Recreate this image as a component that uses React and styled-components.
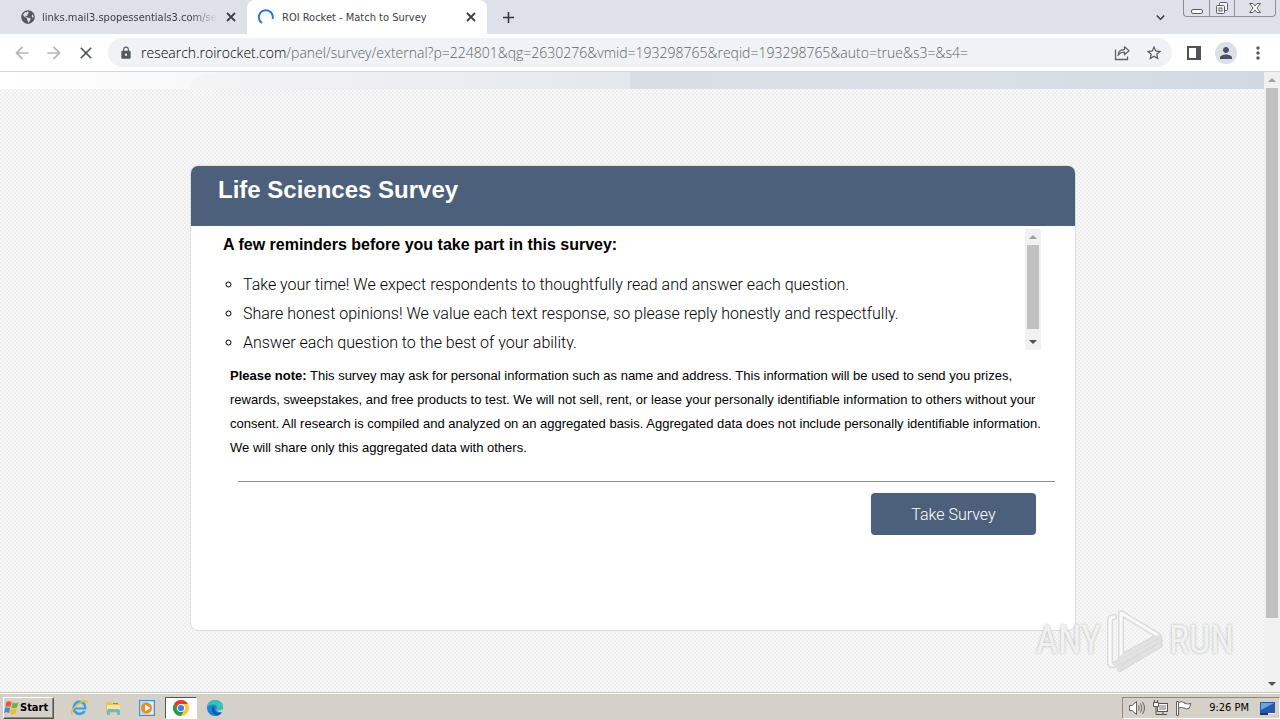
import styled, { createGlobalStyle } from "styled-components";
import { FaGlobeAmericas } from "react-icons/fa";
import {
  MdArrowBack,
  MdArrowForward,
  MdClose,
  MdLock,
  MdStarBorder,
  MdPerson,
  MdMoreVert,
  MdAdd,
  MdExpandMore,
} from "react-icons/md";

const NAVY = "#4d607b";

const reminders = [
  "Take your time! We expect respondents to thoughtfully read and answer each question.",
  "Share honest opinions! We value each text response, so please reply honestly and respectfully.",
  "Answer each question to the best of your ability.",
];

const ShareIcon = () => (
  <svg width="18" height="18" viewBox="0 0 18 18" fill="none" stroke="#5f6368" strokeWidth="1.3">
    <path d="M2.5 5.5v10h12v-3" />
    <path d="M5 11.5c.3-4 2.4-6 6.5-6V2.8l4.5 4-4.5 4V8.2C8.5 8.2 6.5 9.2 5 11.5z" strokeLinejoin="round" />
  </svg>
);

const SidePanelIcon = () => (
  <svg width="14" height="14" viewBox="0 0 14 14">
    <path fill="#4f5256" fillRule="evenodd" d="M0 0h14v14H0zM2 2v10h7V2z" />
  </svg>
);

const SpinnerIcon = () => (
  <svg width="18" height="18" viewBox="0 0 18 18" fill="none" stroke="#2f73d8" strokeWidth="2">
    <path d="M5 15A7 7 0 1 1 15.6 11" />
  </svg>
);

const CloseIcon = () => (
  <svg width="14" height="14" viewBox="0 0 14 14" stroke="#3c4043" strokeWidth="1.8">
    <path d="M3 3l8 8M11 3l-8 8" />
  </svg>
);

const MinimizeIcon = () => (
  <svg width="14" height="14" viewBox="0 0 14 14" fill="#fff" stroke="#5b6068">
    <rect x="1.5" y="8.5" width="11" height="4" rx="1.5" />
  </svg>
);

const RestoreIcon = () => (
  <svg width="14" height="14" viewBox="0 0 14 14" fill="#f5f5f7" stroke="#5b6068">
    <rect x="4.5" y="1.5" width="8" height="8" rx="1" />
    <rect x="1.5" y="4.5" width="8" height="8" rx="1" />
    <rect x="4" y="7" width="3" height="3" />
  </svg>
);

const WinCloseIcon = () => (
  <svg width="14" height="14" viewBox="0 0 14 14" fill="#fff" stroke="#5b6068" strokeLinejoin="round">
    <path d="M1.5 2.5H5l2 2.5 2-2.5h3.5L9 7l3.500 4.500H9L7 9l-2 2.500H1.500L5 7z" />
  </svg>
);

const WindowsLogo = () => (
  <svg width="15" height="15" viewBox="0 0 15 15">
    <path fill="#e8562a" d="M2.5 2Q5 .5 7.5 2L6.5 7Q4 5.5 1.3 7z" />
    <path fill="#76b043" d="M8.5 2.5Q11 4 14.5 2.5L13 7.5Q10 9 7.500 7.500z" />
    <path fill="#3e8fdc" d="M1 8Q3.7 6.5 6.2 8L5 13Q2.5 11.5 0 13z" />
    <path fill="#f6bb1f" d="M7.2 8.5Q10 10 12.8 8.5L11.5 13.5Q8.5 15 6 13.5z" />
  </svg>
);

const ExplorerIcon = () => (
  <svg width="18" height="18" viewBox="0 0 18 18" fill="none">
    <path d="M15 6.200A6 6 0 1 0 14.7 12" stroke="#3aa0e0" strokeWidth="2.6" />
    <path d="M4 9.5h11.3c0-2-.3-2.7-.8-3.6" stroke="#3aa0e0" strokeWidth="2.2" />
    <path d="M2.3 16C-.5 13.5 5 6.5 10.5 3.3 14 1.3 17.3.8 16.5 4" stroke="#e9bd3a" strokeWidth="1.4" />
  </svg>
);

const FolderIcon = () => (
  <svg width="18" height="18" viewBox="0 0 18 18">
    <path fill="#e7c660" d="M2 3h6l1 2h7v9H2z" />
    <path fill="#f9e7a0" d="M3 6h13v5H3z" />
    <path fill="#6bb7dc" d="M4 10h10q2 0 2 2v4h-3v-3H6v3H3v-4z" />
    <path fill="#58a85a" d="M9 4h5v1H9z" />
  </svg>
);

const MediaIcon = () => (
  <svg width="18" height="18" viewBox="0 0 18 18">
    <rect x="1.5" y="1.5" width="15" height="15" fill="#b9d8f2" stroke="#4a8ccb" />
    <path fill="#fff" d="M10 3h5v12h-5z" opacity=".5" />
    <circle cx="8.5" cy="9" r="5.5" fill="#f08a1c" />
    <path fill="#fff" d="M7 5.5v7L12.500 9z" />
  </svg>
);

const ChromeIcon = () => (
  <svg width="18" height="18" viewBox="0 0 18 18">
    <circle cx="9" cy="9" r="8" fill="#fcc934" />
    <path fill="#e33b2e" d="M2.07 5A8 8 0 0 1 15.93 5H9L5.54 11z" />
    <path fill="#1e9e4a" d="M2.07 5A8 8 0 0 0 9 17l3.46-6L5.54 11z" />
    <circle cx="9" cy="9" r="4" fill="#fff" />
    <circle cx="9" cy="9" r="3.1" fill="#3f7ce8" />
  </svg>
);

const EdgeIcon = () => (
  <svg width="18" height="18" viewBox="0 0 18 18">
    <circle cx="9" cy="9" r="8" fill="#1784d8" />
    <path fill="#37c4b4" d="M1.2 8C2 3.5 5 1 9 1c4.5 0 8 3 8 6.5 0 2.5-2 4-4.2 4-1.8 0-3-.6-2.5-1.3C12 8 10 5.5 7 5.5 4.5 5.5 2.5 6.500 1.200 8z" />
    <path fill="#125ba6" d="M6.5 7.5c-2 3 0 8 4.5 9.3 2-.5 3.6-1.6 4.700-3.300-3.700 1.500-8-.5-7.200-4.500z" />
    <path fill="#d6d2c9" d="M10.3 10.2c-.5.7.7 1.3 2.5 1.3 1.8 0 3.2-.7 4-2v3.300c-3 1-6.200 0-6.500-2.600z" />
  </svg>
);

const SpeakerIcon = () => (
  <svg width="18" height="16" viewBox="0 0 18 16" fill="none" stroke="#66635e">
    <path fill="#fff" d="M1.5 5.5H4L8.5 1.5v13L4 10.5H1.5z" />
    <path d="M10.5 5.5q1.5 2.5 0 5M12.5 3.5q3 4.5 0 9M14.5 2q4 6 0 12" />
  </svg>
);

const NetworkIcon = () => (
  <svg width="17" height="16" viewBox="0 0 17 16" fill="none" stroke="#55534f">
    <rect x="5.5" y="3.5" width="10" height="8" fill="#b9b7b2" stroke="#55534f" />
    <path d="M6.5 4.5h8v6h-8z" stroke="#fff" />
    <path d="M7 14.5h8M11 12v2" />
    <path fill="#fff" d="M1.5 2.5h5v4h-5zM2.5 0v2M5.5 0v2" />
    <path d="M4 7v7.5h3" />
  </svg>
);

const FlagIcon = () => (
  <svg width="18" height="16" viewBox="0 0 18 16" stroke="#66635e" fill="#fff">
    <path d="M1.5 1.5h2v14h-2zM3.5 2.5q3-1.5 6 0v1q3 1 6.5 0l-2 5q-3 1-5-.5-2.500-1-5.500 0z" />
  </svg>
);

const DesktopIcon = () => (
  <svg width="17" height="16" viewBox="0 0 17 16">
    <path fill="#2659a8" d="M1 2h15v11H1z" />
    <path fill="#6ba4e6" d="M2 3h13L2 10z" />
    <path fill="#17386d" d="M1 13h8v2H1z" />
    <path fill="#f3f5f8" d="M9 13h7v1H9z" />
  </svg>
);

const PlayMark = () => (
  <svg width="58" height="66" viewBox="0 0 58 66" fill="none" strokeLinejoin="round" strokeLinecap="round">
    <g stroke="#c4c4c4" strokeWidth="6" opacity=".5">
      <path d="M15 50V6l38 23z" />
      <path d="M8 10q-4 0-4 4v42q0 3 4 2l46-25M14 62l40-24" />
    </g>
    <path d="M15 50V6l38 23M8 10q-4 0-4 4v42q0 3 4 2" stroke="#fff" strokeWidth="3" opacity=".85" />
    <path d="M15 50l38-21M8 58l46-25M14 62l40-24" stroke="#e2e2e2" strokeWidth="3" />
  </svg>
);

const Scrollbar = ({ thumb, rest }) => (
  <Track aria-hidden="true">
    <Arrow $up />
    <Thumb $share={thumb} />
    <Gap $share={rest} />
    <Arrow />
  </Track>
);

const BrowserTabs = () => (
  <TabStrip>
    <Tab href="#links">
      <FaGlobeAmericas size={14} color="#55585d" />
      <TabTitle $fade>links.mail3.spopessentials3.com/serv</TabTitle>
      <CloseIcon />
    </Tab>
    <Tab href="#survey" $active>
      <SpinnerIcon />
      <TabTitle>ROI Rocket - Match to Survey</TabTitle>
      <CloseIcon />
    </Tab>
    <NewTab aria-label="New tab"><MdAdd size={19} /></NewTab>
    <TabSearch aria-label="Search tabs"><MdExpandMore size={17} /></TabSearch>
    <WindowButtons>
      <WindowButton aria-label="Minimize"><MinimizeIcon /></WindowButton>
      <WindowButton aria-label="Restore"><RestoreIcon /></WindowButton>
      <WindowButton aria-label="Close" $wide><WinCloseIcon /></WindowButton>
    </WindowButtons>
  </TabStrip>
);

const BrowserToolbar = () => (
  <Toolbar>
    <ToolButton aria-label="Back" $muted><MdArrowBack size={20} /></ToolButton>
    <ToolButton aria-label="Forward" $muted><MdArrowForward size={20} /></ToolButton>
    <ToolButton aria-label="Stop loading"><MdClose size={20} /></ToolButton>
    <AddressBar>
      <MdLock size={14} />
      <Address>
        <b>research.roirocket.com</b>
        /panel/survey/external?p=224801&amp;qg=2630276&amp;vmid=193298765&amp;reqid=193298765&amp;auto=true&amp;s3=&amp;s4=
      </Address>
      <ToolButton aria-label="Share"><ShareIcon /></ToolButton>
      <ToolButton aria-label="Bookmark"><MdStarBorder size={18} /></ToolButton>
    </AddressBar>
    <ToolButton aria-label="Side panel"><SidePanelIcon /></ToolButton>
    <ToolButton aria-label="Profile"><Avatar><MdPerson size={18} /></Avatar></ToolButton>
    <ToolButton aria-label="Menu"><MdMoreVert size={20} /></ToolButton>
  </Toolbar>
);

const SurveyCard = () => (
  <Card>
    <CardHeader>
      <CardTitle>Life Sciences Survey</CardTitle>
    </CardHeader>
    <ReminderBox>
      <ReminderText>
        <ReminderTitle>A few reminders before you take part in this survey:</ReminderTitle>
        <ReminderList>
          {reminders.map((text) => <Reminder key={text}>{text}</Reminder>)}
        </ReminderList>
      </ReminderText>
      <Scrollbar thumb={84} rest={5} />
    </ReminderBox>
    <Note>
      <b>Please note:</b> This survey may ask for personal information such as name and address. This information will be used to send you prizes,<br />
      rewards, sweepstakes, and free products to test. We will not sell, rent, or lease your personally identifiable information to others without your<br />
      consent. All research is compiled and analyzed on an aggregated basis. Aggregated data does not include personally identifiable information.<br />
      We will share only this aggregated data with others.
    </Note>
    <Divider />
    <Actions>
      <TakeSurvey>Take Survey</TakeSurvey>
    </Actions>
  </Card>
);

const WindowsTaskbar = () => (
  <Taskbar>
    <StartButton><WindowsLogo />Start</StartButton>
    <TaskButton aria-label="Internet Explorer"><ExplorerIcon /></TaskButton>
    <TaskButton aria-label="File Explorer"><FolderIcon /></TaskButton>
    <TaskButton aria-label="Media Player"><MediaIcon /></TaskButton>
    <TaskButton aria-label="Chrome" $active><ChromeIcon /></TaskButton>
    <TaskButton aria-label="Edge"><EdgeIcon /></TaskButton>
    <Tray>
      <SpeakerIcon />
      <NetworkIcon />
      <FlagIcon />
      <Clock>9:26 PM</Clock>
      <DesktopIcon />
    </Tray>
  </Taskbar>
);

const App = () => (
  <Screen>
    <GlobalStyle />
    <BrowserTabs />
    <BrowserToolbar />
    <Viewport>
      <Page>
        <Banner><BannerCurve /><BannerEnd /></Banner>
        <CardArea><SurveyCard /></CardArea>
      </Page>
      <Scrollbar thumb={531} rest={58} />
      <Watermark><span>ANY</span><PlayMark /><span>RUN</span></Watermark>
    </Viewport>
    <WindowsTaskbar />
  </Screen>
);

const GlobalStyle = createGlobalStyle`
  * {
    box-sizing: border-box;
  }
  body {
    margin: 0;
    font-family: "Liberation Sans", Arial, sans-serif;
  }
  button {
    border: 0;
    padding: 0;
    background: none;
    font-family: inherit;
  }
  svg {
    flex-shrink: 0;
  }
`;

const Screen = styled.div`
  display: flex;
  flex-direction: column;
  height: 100vh;
  overflow: hidden;
`;

const TabStrip = styled.div`
  display: flex;
  align-items: center;
  height: 34px;
  background: #dee1e9;
  color: #3c4043;
`;

const Tab = styled.a`
  display: flex;
  align-items: center;
  gap: 7px;
  width: ${({ $active }) => ($active ? "240px" : "247px")};
  height: 100%;
  padding: 0 9px 0 ${({ $active }) => ($active ? "10px" : "21px")};
  border-radius: 8px 8px 0 0;
  background: ${({ $active }) => ($active ? "#fff" : "transparent")};
  color: #3c4043;
  font-family: "DejaVu Sans Condensed", "DejaVu Sans", sans-serif;
  font-size: 11px;
  text-decoration: none;
`;

const TabTitle = styled.span`
  flex: 1;
  min-width: 0;
  white-space: nowrap;
  mask-image: ${({ $fade }) => ($fade ? "linear-gradient(90deg, #000 85%, transparent)" : "none")};
`;

const NewTab = styled.button`
  display: flex;
  margin-left: 12px;
  color: #33363a;
`;

const TabSearch = styled.button`
  display: flex;
  margin-left: auto;
  margin-right: 14px;
  color: #33363a;
`;

const WindowButtons = styled.div`
  display: flex;
  align-self: flex-start;
  height: 17px;
  margin-right: 4px;
  border: 1px solid #8b8f98;
  border-top: 0;
  border-radius: 0 0 4px 4px;
`;

const WindowButton = styled.button`
  display: flex;
  align-items: center;
  justify-content: center;
  width: ${({ $wide }) => ($wide ? "41px" : "25px")};

  & + & {
    border-left: 1px solid #8b8f98;
  }
`;

const Toolbar = styled.div`
  display: flex;
  align-items: center;
  gap: 4px;
  height: 38px;
  padding: 0 8px;
  border-bottom: 1px solid #d5d7da;
  background: #fff;
`;

const ToolButton = styled.button`
  display: flex;
  align-items: center;
  justify-content: center;
  width: 28px;
  height: 28px;
  color: ${({ $muted }) => ($muted ? "#b4b6b9" : "#55585d")};
`;

const AddressBar = styled.div`
  display: flex;
  flex: 1;
  align-items: center;
  gap: 4px;
  height: 29px;
  margin: 0 4px;
  padding: 0 4px 0 11px;
  border-radius: 15px;
  background: #f0f2f5;
  color: #55585d;
`;

const Address = styled.span`
  flex: 1;
  overflow: hidden;
  padding-left: 4px;
  color: #5f6368;
  font-family: "Open Sans", "Noto Sans", sans-serif;
  font-size: 14px;
  font-weight: 300;
  white-space: nowrap;

  b {
    color: #000;
    font-weight: 300;
  }
`;

const Avatar = styled.span`
  display: flex;
  align-items: center;
  justify-content: center;
  width: 22px;
  height: 22px;
  border-radius: 50%;
  background: #dcdfe5;
  color: #4a5068;
`;

const Viewport = styled.div`
  position: relative;
  display: flex;
  flex: 1;
  min-height: 0;
`;

const Page = styled.main`
  flex: 1;
  background: repeating-conic-gradient(#eee 0 25%, #f9f9f9 0 50%) 0 0 / 4px 4px;
`;

const Banner = styled.div`
  display: flex;
  height: 17px;
  padding-left: 15%;
  background: linear-gradient(90deg, #fff, #f8f8f8 15%);
`;

const BannerCurve = styled.div`
  width: 41%;
  border-top-left-radius: 30px 17px;
  background: linear-gradient(90deg, #f4f4f5, #efeff2 40%, #e3e8ed);
`;

const BannerEnd = styled.div`
  flex: 1;
  background: linear-gradient(90deg, #d9dee5, #dbe0e8 50%, #d0d9e2);
`;

const CardArea = styled.div`
  padding: 76px 0 0 2px;
`;

const Card = styled.section`
  max-width: 886px;
  min-height: 466px;
  margin: 0 auto;
  border: 1px solid #dcdee0;
  border-radius: 8px;
  background: #fff;
  overflow: hidden;
`;

const CardHeader = styled.header`
  height: 60px;
  padding: 10px 27px;
  background: ${NAVY};
`;

const CardTitle = styled.h1`
  margin: 0;
  color: #fff;
  font-size: 24px;
  line-height: 28px;
`;

const ReminderBox = styled.div`
  display: flex;
  height: 121px;
  margin: 3px 34px 0 32px;
`;

const ReminderText = styled.div`
  flex: 1;
  overflow: hidden;
`;

const ReminderTitle = styled.h2`
  margin: 6px 0 15px;
  font-size: 16px;
  line-height: 20px;
`;

const ReminderList = styled.ul`
  margin: 0;
  padding-left: 20px;
  list-style: circle;
`;

const Reminder = styled.li`
  color: #000;
  font-family: Roboto, "Liberation Sans", sans-serif;
  font-size: 16px;
  font-weight: 300;
  line-height: 29px;
`;

const Note = styled.p`
  margin: 14px 24px 0 39px;
  font-size: 13px;
  line-height: 24px;
  white-space: nowrap;
`;

const Divider = styled.hr`
  margin: 21px 20px 0 47px;
  border: 0;
  border-top: 1px solid #8a8d92;
`;

const Actions = styled.div`
  display: flex;
  justify-content: flex-end;
  padding: 11px 39px;
`;

const TakeSurvey = styled.button`
  width: 165px;
  height: 42px;
  border-radius: 4px;
  background: ${NAVY};
  color: #fff;
  font-family: Roboto, "Liberation Sans", sans-serif;
  font-size: 16px;
  font-weight: 300;
`;

const Track = styled.div`
  display: flex;
  flex-direction: column;
  width: 16px;
  padding: 0 2px;
  background: #f1f1f1;
`;

const Arrow = styled.span`
  flex: 0 0 16px;
  display: flex;
  align-items: center;
  justify-content: center;

  &::before {
    content: "";
    border: 4px solid transparent;
    border-top-width: ${({ $up }) => ($up ? "0" : "4px")};
    border-bottom-width: ${({ $up }) => ($up ? "4px" : "0")};
    border-top-color: #505050;
    border-bottom-color: #a0a0a0;
  }
`;

const Thumb = styled.span`
  flex: ${({ $share }) => $share} 0 0;
  background: #c1c1c1;
`;

const Gap = styled.span`
  flex: ${({ $share }) => $share} 0 0;
`;

const Watermark = styled.div`
  position: absolute;
  right: 46px;
  bottom: 19px;
  display: flex;
  align-items: center;
  gap: 5px;
  color: rgba(248, 248, 248, 0.9);
  font-family: "Liberation Sans Narrow", "Roboto Condensed", "Liberation Sans", sans-serif;
  font-size: 38px;
  text-shadow: 0 0 3px #b0b0b0;
`;

const Taskbar = styled.footer`
  display: flex;
  align-items: center;
  height: 28px;
  padding: 2px 0 0 3px;
  border-top: 1px solid #c9c6c0;
  background: #d5d0c8;
  box-shadow: inset 0 1px #fff;
  font-family: "DejaVu Sans Condensed", "DejaVu Sans", sans-serif;
  font-size: 11px;
`;

const StartButton = styled.button`
  display: flex;
  align-items: center;
  gap: 1px;
  width: 51px;
  height: 22px;
  margin-right: 9px;
  border: 1px solid;
  border-color: #fff #55534f #55534f #fff;
  box-shadow: inset -1px -1px #8d8a84;
  font-size: 11px;
  font-weight: 700;
`;

const TaskButton = styled.button`
  display: flex;
  align-items: center;
  justify-content: center;
  width: 32px;
  height: 22px;
  margin-right: 2px;
  border: 1px solid;
  border-color: ${({ $active }) => ($active ? "#55534f #fff #fff #55534f" : "transparent")};
  background: ${({ $active }) => ($active ? "#fff" : "transparent")};
`;

const Tray = styled.div`
  display: flex;
  align-items: center;
  gap: 6px;
  height: 22px;
  margin-left: auto;
  padding: 0 3px 0 5px;
  border: 1px solid;
  border-color: #8d8a84 #fff #fff #8d8a84;
`;

const Clock = styled.time`
  margin: 0 4px 0 10px;
`;

export default App;
